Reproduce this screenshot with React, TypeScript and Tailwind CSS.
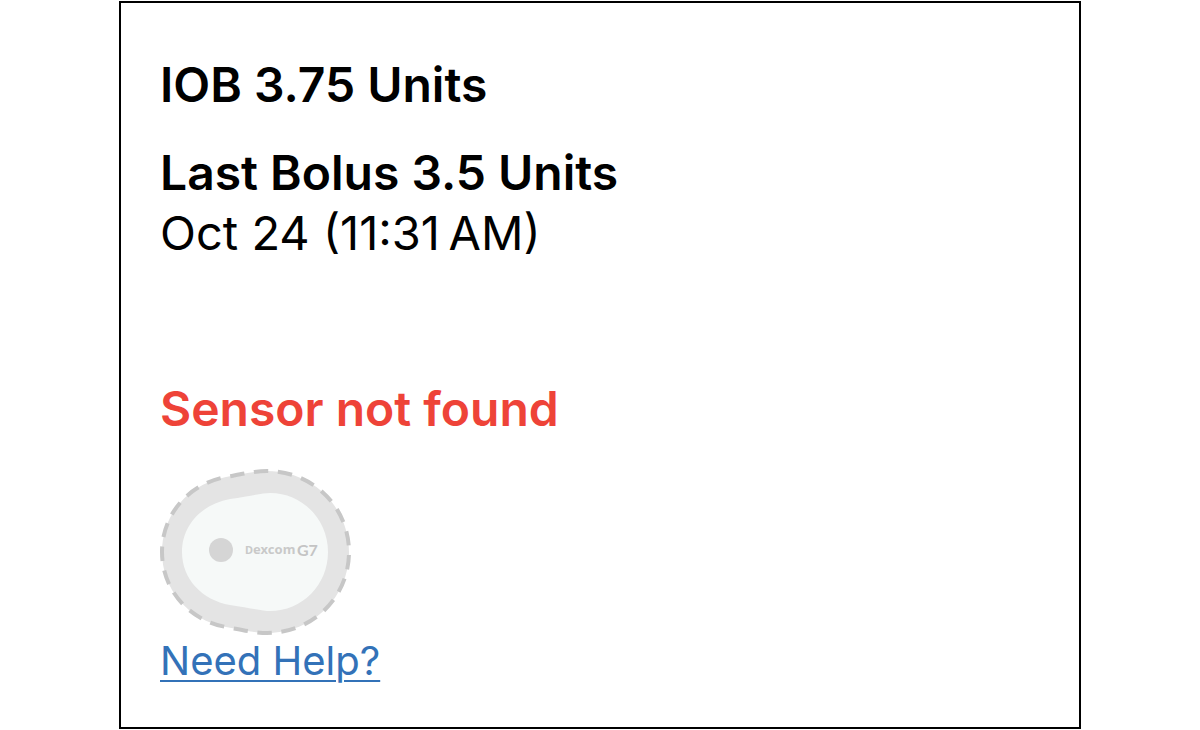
function SensorIllustration() {
  return (
    <svg viewBox="0 0 192 168" className="h-42 w-48" role="img" aria-label="Dexcom G7 sensor">
      <path
        d="M107 3C153 3 189 39 189 84C189 129 153 165 107 165C95 165 82 162 66 159C28 152 2 121 2 84C2 47 28 16 66 9C82 6 95 3 107 3Z"
        fill="#e4e4e4"
      />
      <path
        d="M107 3C153 3 189 39 189 84C189 129 153 165 107 165C95 165 82 162 66 159C28 152 2 121 2 84C2 47 28 16 66 9C82 6 95 3 107 3Z"
        fill="none"
        stroke="#c7c7c7"
        strokeWidth="4"
        pathLength="230"
        strokeDasharray="6 4"
        strokeDashoffset="5.5"
      />
      <path
        d="M110 25C142 25 168 51 168 84C168 117 142 143 110 143C103 143 90 140 70 137C42 132 22 111 22 84C22 57 42 36 70 31C90 28 103 25 110 25Z"
        fill="#f6f9f8"
      />
      <circle cx="61" cy="82" r="12" fill="#d5d5d5" />
      <text x="85" y="86" fontSize="13" fontWeight="700" fill="#c9c9c9" className="font-['Noto_Sans',sans-serif]">
        <tspan fontSize="11">D</tspan>excom
      </text>
      <text x="137" y="88" fontSize="16" fontWeight="700" fill="#c4c4c4" className="font-['Lato',sans-serif]">
        G7
      </text>
    </svg>
  );
}

export default function App() {
  return (
    <main className="bg-white py-0.5 font-['Inter',sans-serif] text-black">
      <section className="mx-auto w-4/5 px-10 pt-[53px] pb-[42px] outline-2 -outline-offset-1 outline-black">
        <h1 className="text-5xl leading-15 font-semibold">IOB 3.75 Units</h1>

        <div className="mt-7">
          <h2 className="text-5xl leading-15 font-semibold">Last Bolus 3.5 Units</h2>
          <p className="text-[47px] leading-15">Oct 24 (11:31{'\u202f'}AM)</p>
        </div>

        <div className="mt-29">
          <h2 className="text-5xl leading-15 font-semibold text-[#ee4338]">Sensor not found</h2>
          <div className="mt-[29px]">
            <SensorIllustration />
          </div>
          <a href="#help" className="text-[40px] leading-[50px] text-[#3372b8] underline decoration-2 underline-offset-5">
            Need Help?
          </a>
        </div>
      </section>
    </main>
  );
}
